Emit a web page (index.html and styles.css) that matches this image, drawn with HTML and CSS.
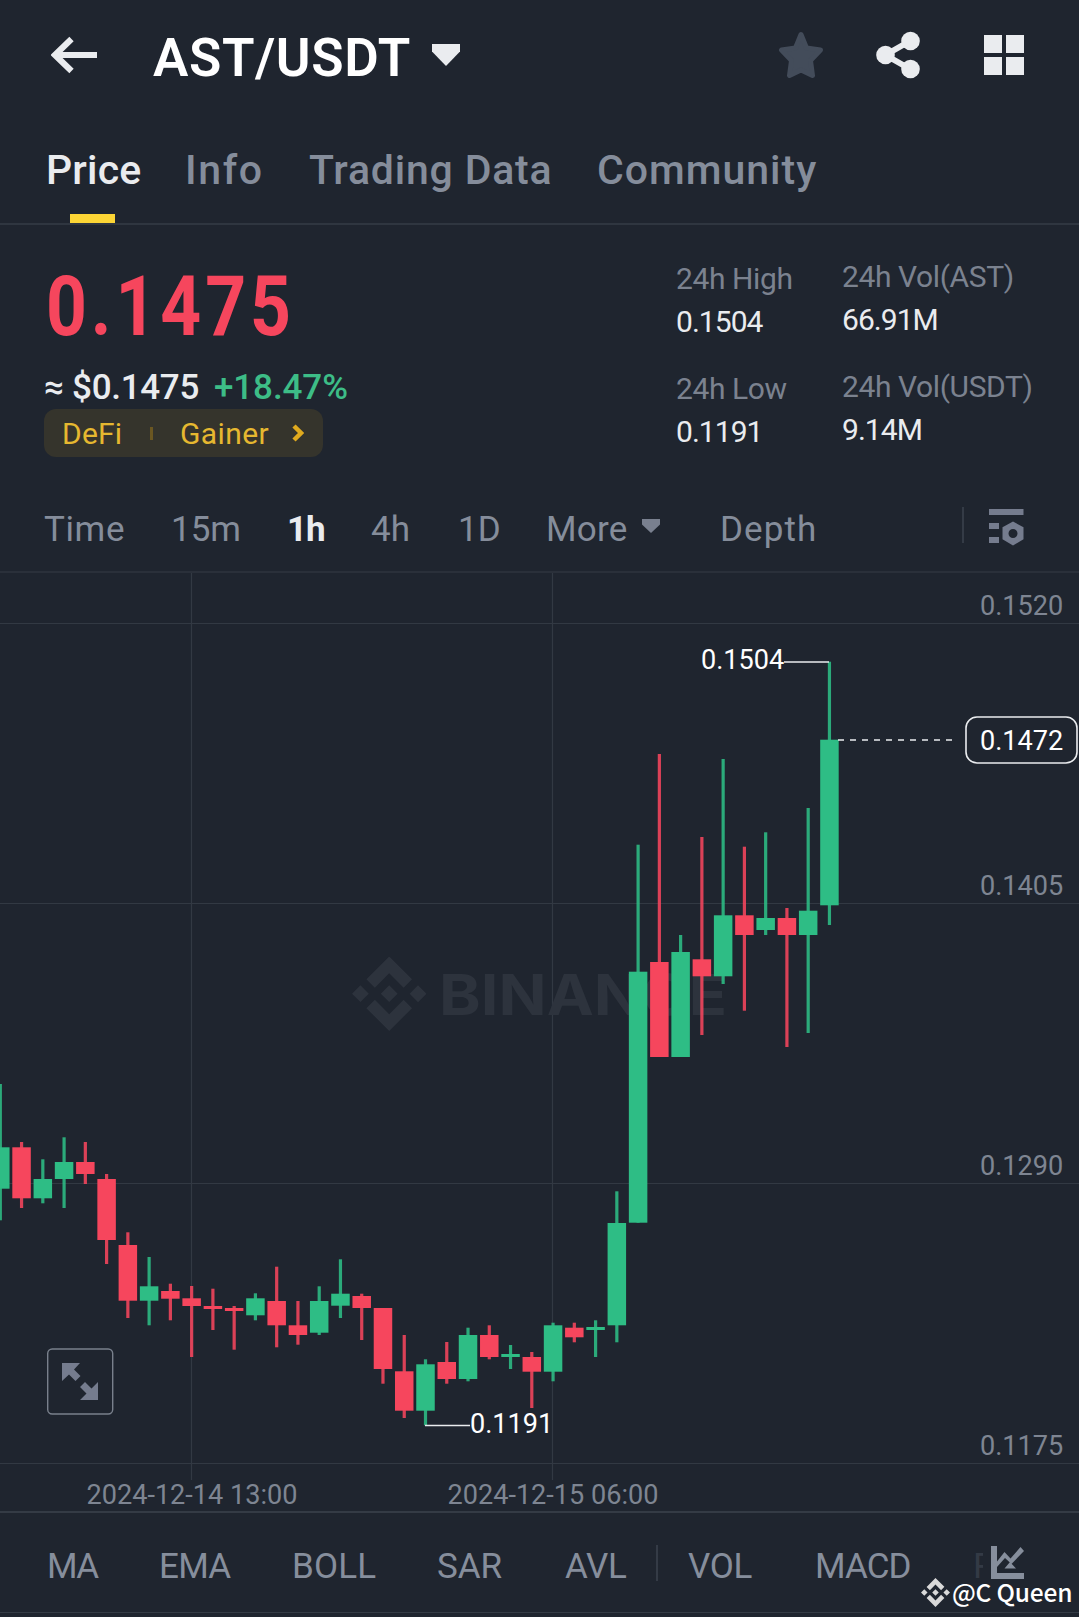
FILE: index.html
```html
<!DOCTYPE html>
<html lang="en">
<head>
<meta charset="utf-8">
<title>AST/USDT</title>
<link rel="stylesheet" href="styles.css">
</head>
<body>
<main class="app">
  <header class="header">
    <svg class="back" width="46" height="38" viewBox="0 0 46 38"><path d="M20.500 3 4 19l16.500 16M4 19h42" fill="none" stroke="#eaecef" stroke-width="6.200"/></svg>
    <h1 class="pair">AST/USDT</h1>
    <svg class="caret" width="28" height="22" viewBox="0 0 28 22"><path d="M0 0h28v7.500L14 22 0 7.500z" fill="#eaecef"/></svg>
    <div class="actions">
      <svg width="46" height="48" viewBox="0 0 46 48"><path d="M23 3.500l5.500 13.500 14 2-10 10.500 2 15L23 39 11.500 44.500l2-15L3.500 19l14-2z" fill="#434c5a" stroke="#434c5a" stroke-width="5" stroke-linejoin="round"/></svg>
      <svg width="44" height="48" viewBox="0 0 44 48"><g fill="#eaecef"><circle cx="9.500" cy="24" r="9.300"/><circle cx="34.500" cy="10" r="9.300"/><circle cx="34.500" cy="38" r="9.300"/></g><path d="M34 10 9.500 24 34 38" fill="none" stroke="#eaecef" stroke-width="6"/></svg>
      <svg width="40" height="40" viewBox="0 0 40 40"><path d="M0 0h18v18H0zM22 0h18v18H22zM0 22h18v18H0zM22 22h18v18H22z" fill="#eaecef"/></svg>
    </div>
  </header>

  <nav class="tabs">
    <a class="tab tab-price active">Price</a>
    <a class="tab tab-info">Info</a>
    <a class="tab tab-trading">Trading Data</a>
    <a class="tab tab-community">Community</a>
  </nav>

  <section class="summary">
    <div class="quote">
      <div class="last"><span class="last-num">0.1475</span></div>
      <div class="sub"><span class="fiat">≈ $0.1475</span><span class="change">+18.47%</span></div>
      <div class="tags">
        <span class="tag-defi">DeFi</span><i class="tag-sep"></i><span class="tag-gainer">Gainer</span>
        <svg width="12" height="18" viewBox="0 0 12 18"><path d="M2 2l7 7-7 7" fill="none" stroke="#e0aa1e" stroke-width="4.500"/></svg>
      </div>
    </div>
    <div class="stats stats-range">
      <dl><dt>24h High</dt><dd>0.1504</dd></dl>
      <dl><dt>24h Low</dt><dd>0.1191</dd></dl>
    </div>
    <div class="stats stats-volume">
      <dl><dt>24h Vol(AST)</dt><dd>66.91M</dd></dl>
      <dl><dt>24h Vol(USDT)</dt><dd>9.14M</dd></dl>
    </div>
  </section>

  <nav class="intervals">
    <span class="iv iv-time">Time</span>
    <span class="iv iv-15m">15m</span>
    <span class="iv iv-1h selected">1h</span>
    <span class="iv iv-4h">4h</span>
    <span class="iv iv-1d">1D</span>
    <span class="iv iv-more">More</span>
    <svg class="more-caret" width="18" height="14" viewBox="0 0 18 14"><path d="M0 0h18v5.500L9 14 0 5.500z" fill="#79808f"/></svg>
    <span class="iv iv-depth">Depth</span>
    <i class="bar"></i>
    <svg class="settings" width="35" height="37" viewBox="0 0 35 37"><g fill="#757c8e"><path d="M0 0h34.500v6H0zM0 14h10v6H0zM0 28h10v6H0z"/><path fill-rule="evenodd" d="M24 12.500l10.500 5.800v12L24 36.500l-10.500-6.200v-12zM24 20a4.500 4.500 0 1 0 0 9 4.500 4.500 0 0 0 0-9z"/></g></svg>
  </nav>

  <svg class="chart" width="1079" height="938" viewBox="0 573 1079 938">
    <path class="grid" d="M0 623.500H1079M0 903.500H1079M0 1183.500H1079M0 1463.500H1079M191.500 573V1480M552.500 573V1480"/>
    <g class="brand">
      <svg x="352" y="956.500" width="74.500" height="74.500" viewBox="0 0 24 24"><path d="M16.624 13.920l2.718 2.715-7.353 7.353-7.353-7.352 2.718-2.716 4.635 4.659zM21.261 9.284 24 12l-2.715 2.716L18.568 12zM11.989 9.285l2.716 2.691-2.716 2.717L9.272 12zM2.716 9.284 5.409 12l-2.692 2.692L0 12zM11.989.012l7.353 7.329-2.718 2.715-4.635-4.636-4.636 4.660L4.636 7.364z"/></svg>
      <text x="439" y="1014.500" textLength="288" lengthAdjust="spacingAndGlyphs">BINANCE</text>
    </g>
    <g id="candles"></g>
    <g class="marks">
      <path d="M784 662H829M425 1425.500H470"/>
      <path d="M838 740H952" stroke-dasharray="6 6"/>
      <rect x="966" y="717" width="111" height="46" rx="11"/>
      <text x="701" y="669">0.1504</text>
      <text x="470" y="1433">0.1191</text>
      <text x="980" y="750">0.1472</text>
    </g>
    <g class="axis">
      <text x="980" y="615">0.1520</text>
      <text x="980" y="895">0.1405</text>
      <text x="980" y="1175">0.1290</text>
      <text x="980" y="1455">0.1175</text>
      <text x="86.500" y="1504">2024-12-14 13:00</text>
      <text x="447.500" y="1504">2024-12-15 06:00</text>
    </g>
    <g class="expand">
      <rect x="47.700" y="1349" width="65" height="65" rx="4.500"/>
      <path d="M62 1363h18l-6 6.500 6.500 6.500-5 5-6.500-6.500-7 6.500zM98 1400H80l6.500-6.500-6.500-6.500 5-5 6.500 6.500 6.500-6.500z"/>
    </g>
  </svg>

  <nav class="indicators">
    <span class="ind ind-ma">MA</span>
    <span class="ind ind-ema">EMA</span>
    <span class="ind ind-boll">BOLL</span>
    <span class="ind ind-sar">SAR</span>
    <span class="ind ind-avl">AVL</span>
    <i class="bar"></i>
    <span class="ind ind-vol">VOL</span>
    <span class="ind ind-macd">MACD</span>
    <span class="ind ind-fade">R</span>
    <svg class="chart-icon" width="33" height="33" viewBox="0 0 33 33"><path d="M0 0h6v15.500L13.500 6l6 6.500L29.500 1l3.500 4L20.500 18 14 12 6 21v6h27v6H0zM19 16l6 6.500H13.500z" fill="#868e9c"/></svg>
  </nav>

  <div class="credit">
    <svg width="29" height="29" viewBox="0 0 24 24"><path fill="#d9d9d9" d="M16.624 13.920l2.718 2.715-7.353 7.353-7.353-7.352 2.718-2.716 4.635 4.659zM21.261 9.284 24 12l-2.715 2.716L18.568 12zM11.989 9.285l2.716 2.691-2.716 2.717L9.272 12zM2.716 9.284 5.409 12l-2.692 2.692L0 12zM11.989.012l7.353 7.329-2.718 2.715-4.635-4.636-4.636 4.660L4.636 7.364z"/></svg>
    <span>@C Queen</span>
  </div>
</main>
<script src="script.js"></script>
</body>
</html>
```
FILE: styles.css
```css
* { box-sizing: border-box; margin: 0; padding: 0; }
body { background: #1f252f; font-family: Roboto, "Liberation Sans", sans-serif; color: #eaecef; }
svg { display: block; flex: none; }
.app { position: relative; width: 1079px; height: 1617px; overflow: hidden; }

.header { display: flex; align-items: center; height: 110px; padding: 0 55px 0 51px; }
.pair { width: 256px; margin: 5px 0 0 56px; font-size: 53px; font-weight: 600; line-height: 64px; letter-spacing: .6px; white-space: nowrap; color: #fff; }
.caret { margin-left: 23px; }
.actions { display: flex; align-items: center; margin-left: auto; gap: 52px; }
.actions svg:nth-child(3) { margin-left: 12px; }

.tabs { display: flex; height: 115px; padding: 30px 0 0 48px; border-bottom: 2px solid #2f3640; font-size: 41px; font-weight: 500; line-height: 60px; color: #858d9b; }
.tab { white-space: nowrap; }
.tab.active { color: #eaecef; }
.tab.active::after { content: ""; display: block; width: 45px; height: 9px; margin: 14px 0 0 24px; background: #fcd535; }
.tab-price { width: 139px; margin-left: -2px; letter-spacing: .2px; }
.tab-info { width: 124px; letter-spacing: 1.6px; }
.tab-trading { width: 288px; letter-spacing: .8px; }
.tab-community { letter-spacing: 1px; }

.summary { display: flex; height: 254px; }
.quote { width: 676px; padding: 40px 0 0 44px; }
.last { height: 84px; font-size: 84px; font-weight: 700; line-height: 84px; color: #f6465d; }
.last-num { display: inline-block; margin-left: 2px; transform: scaleX(.85); transform-origin: 0 50%; letter-spacing: 4.6px; }
.sub { display: flex; margin-top: 16px; padding-top: 1px; height: 44px; font-size: 35px; font-weight: 500; line-height: 44px; }
.fiat { width: 170px; white-space: nowrap; letter-spacing: -.3px; }
.change { color: #3dbd87; letter-spacing: -.1px; }
.tags { display: flex; align-items: center; width: 279px; height: 48px; padding: 0 19px 0 18px; border-radius: 12px; background: #35342c; font-size: 30px; line-height: 46px; color: #e6b830; }
.tag-defi { width: 88px; padding-top: 2px; letter-spacing: .2px; }
.tag-sep { width: 3px; height: 13px; background: #6b5722; }
.tag-gainer { width: 112px; margin-left: 27px; padding-top: 2px; letter-spacing: .4px; }
.stats { padding-top: 32px; font-size: 30px; line-height: 43px; white-space: nowrap; letter-spacing: -.4px; }
.stats dl { margin-bottom: 24px; }
.stats dt { color: #7b828f; }
.stats dd { letter-spacing: -.95px; }
.stats-range { width: 166px; }
.stats-volume { padding-top: 30px; }

.intervals { display: flex; align-items: center; height: 94px; padding-left: 44px; border-bottom: 2px solid #2a303a; font-size: 35px; color: #858d9b; }
.iv { padding-top: 10px; line-height: 44px; white-space: nowrap; }
.iv-time { width: 127px; letter-spacing: .6px; }
.iv-15m { width: 116px; }
.iv-1h { width: 84px; letter-spacing: -1px; }
.iv-4h { width: 87px; }
.iv-1d { width: 88px; }
.iv-more { width: 96px; letter-spacing: .2px; }
.iv-depth { width: 242px; margin-left: 60px; letter-spacing: 1.1px; }
.selected { font-weight: 700; color: #eaecef; }
.bar { width: 2px; height: 36px; background: #343b46; }
.more-caret { margin-top: 2px; }
.settings { margin: 4px 0 0 25px; }

.grid { fill: none; stroke: #323943; stroke-width: 1.2; }
.brand { fill: #2d333d; font: 700 57px Inter, sans-serif; }
.chart text { white-space: pre; }
.marks, .axis { font: 27.1px Roboto, sans-serif; }
.marks text { fill: #fff; }
.marks path, .marks rect { fill: none; stroke: #eaecef; stroke-width: 1.6; }
.axis { fill: #7e8592; }
.up { fill: #2ebd85; }
.down { fill: #f6465d; }
.wick { opacity: .88; }
.expand rect { fill: none; stroke: #79808c; stroke-width: 1.4; }
.expand path { fill: #757c8e; }

.indicators { display: flex; align-items: center; height: 102px; padding-left: 47px; border-top: 2px solid #343b45; border-bottom: 1px solid #343b45; font-size: 35px; color: #868e9c; }
.ind { padding-top: 8px; line-height: 44px; white-space: nowrap; }
.ind-ma { width: 112px; letter-spacing: -1.6px; }
.ind-ema { width: 133px; letter-spacing: -.7px; }
.ind-boll { width: 145px; letter-spacing: .2px; }
.ind-sar { width: 128px; }
.ind-avl { width: 91px; letter-spacing: -.3px; }
.ind-vol { width: 127px; margin-left: 30px; letter-spacing: -.3px; }
.ind-macd { width: 158px; letter-spacing: -.9px; }
.ind-fade { width: 10px; margin-right: 8px; overflow: hidden; opacity: .2; }
.credit { position: absolute; left: 921px; top: 1573px; display: flex; align-items: center; gap: 2px; font: 500 24.500px/38px "Noto Sans CJK SC", sans-serif; color: #fff; white-space: nowrap; letter-spacing: -.2px; }
```
FILE: script.js
```js
// Each candle: direction, high, body top, body bottom, low (chart units).
const candles = [
  ["up", 1084, 1147.3, 1188.7, 1220.3], ["down", 1142, 1147.3, 1198.3, 1208],
  ["up", 1159.3, 1179, 1198.3, 1203.3], ["up", 1137.3, 1162, 1179, 1208],
  ["down", 1142, 1162, 1174, 1184], ["down", 1174, 1179, 1240, 1264],
  ["down", 1232.3, 1245, 1300.7, 1318], ["up", 1257, 1286.3, 1300.7, 1325.3],
  ["down", 1283.7, 1291, 1298.7, 1320.3], ["down", 1286, 1298.3, 1306, 1357],
  ["down", 1288.7, 1306, 1309, 1330], ["down", 1306, 1308, 1311, 1349.7],
  ["up", 1293.3, 1298.3, 1315.3, 1320.3], ["down", 1266.7, 1301, 1325.3, 1347.3],
  ["down", 1301, 1325.3, 1335, 1344.7], ["up", 1286.3, 1301, 1332.7, 1335],
  ["up", 1259.3, 1293.7, 1305.7, 1318], ["down", 1293.7, 1296, 1308, 1340],
  ["down", 1308, 1308, 1369, 1383.7], ["down", 1335, 1371.3, 1410.7, 1418],
  ["up", 1359.3, 1364.3, 1410.7, 1425.3], ["down", 1342, 1362, 1379, 1383.7],
  ["up", 1327.7, 1335, 1379, 1381.3], ["down", 1325.3, 1335, 1357, 1359.3],
  ["up", 1345, 1354, 1357, 1369], ["down", 1352, 1357, 1371.7, 1408],
  ["up", 1322.7, 1325.3, 1371.7, 1381.3], ["down", 1322.7, 1327.7, 1337.3, 1342.3],
  ["up", 1320.3, 1327, 1330, 1357], ["up", 1191.3, 1223, 1325.3, 1342.3],
  ["up", 844.7, 971.7, 1222.7, 1222.7], ["down", 754, 962, 1057, 1057],
  ["up", 935, 952, 1057, 1057], ["down", 837, 959.3, 976.3, 1035],
  ["up", 759, 915.3, 976.3, 984], ["down", 846.7, 915.3, 935, 1010.7],
  ["up", 832.3, 918, 930, 935], ["down", 908, 918, 935, 1047],
  ["up", 808, 910.7, 935, 1033], ["up", 661.7, 739.7, 905.3, 925]
];

const layer = document.getElementById("candles");

function addRect(cls, x, y, width, height) {
  const rect = document.createElementNS("http://www.w3.org/2000/svg", "rect");
  rect.setAttribute("class", cls);
  rect.setAttribute("x", x);
  rect.setAttribute("y", y);
  rect.setAttribute("width", width);
  rect.setAttribute("height", height);
  layer.appendChild(rect);
}

candles.forEach(([dir, high, top, bottom, low], i) => {
  const cx = 0.3 + 21.26 * i;
  addRect(dir + " wick", cx - 1.6, high, 3.2, low - high);
  addRect(dir, cx - 9.25, top, 18.5, bottom - top);
});
```
